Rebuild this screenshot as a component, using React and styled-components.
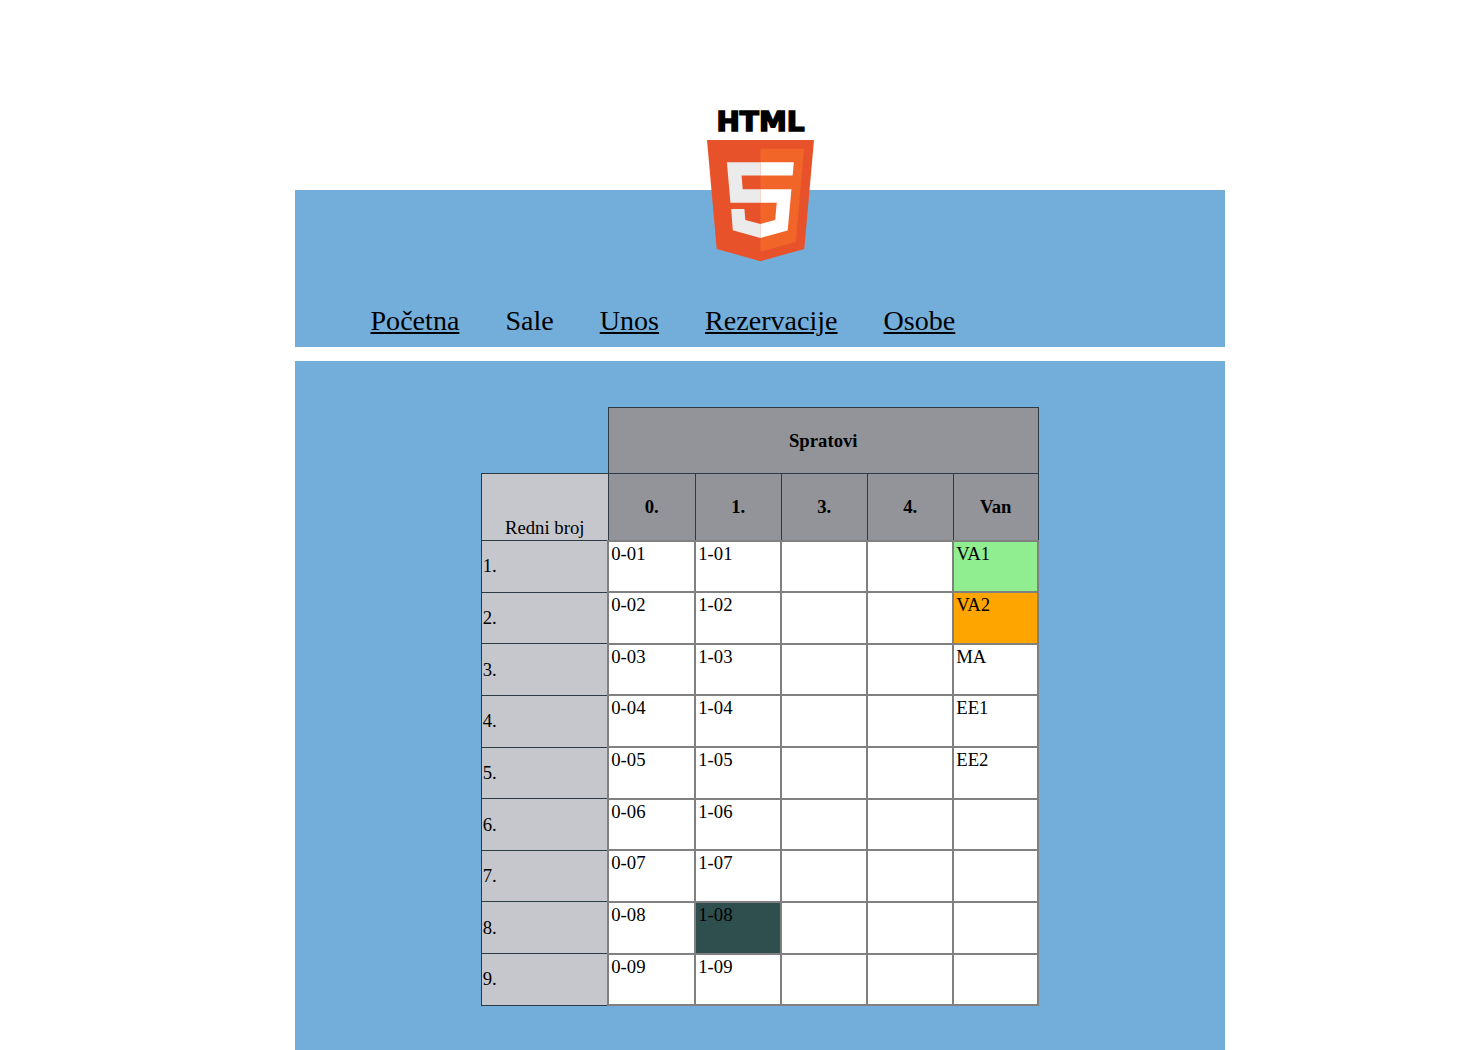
import React from "react";
import styled, { createGlobalStyle } from "styled-components";

const GlobalStyle = createGlobalStyle`
    html, body {
        margin: 0;
        padding: 0;
        height: 1050px;
        overflow: hidden;
        background: #ffffff;
        font-family: "Liberation Serif", "Times New Roman", serif;
        color: #000000;
    }
`;

const Page = styled.div`
    width: 930px;
    margin-left: 295px;
    padding-top: 190px;
`;

const Header = styled.header`
    height: 156.5px;
    background-color: #73aedb;
    display: flex;
    flex-direction: column;
`;

const Logo = styled.svg`
    display: block;
    width: 107px;
    height: 162px;
    margin: -90px 0 0 412.3px;
`;

const Nav = styled.nav`
    display: flex;
    gap: 46px;
    margin-top: 42px;
    padding-left: 75.5px;
    font-size: 28.08px;
    line-height: 34px;
`;

const NavLink = styled.a`
    color: #000000;
    text-decoration: ${(p) => (p.$plain ? "none" : "underline")};
    cursor: pointer;
`;

const Content = styled.main`
    margin-top: 14.5px;
    height: 689px;
    padding-top: 46px;
    box-sizing: border-box;
    background-color: #73aedb;
`;

const Table = styled.table`
    width: 557px;
    margin: 0 auto;
    table-layout: fixed;
    border-collapse: collapse;
    font-size: 18.72px;
`;

const Column = styled.col`
    width: ${(p) => p.$width}px;
`;

const HeadRow = styled.tr`
    height: ${(p) => p.$height}px;
`;

const BodyRow = styled.tr`
    height: 51.65px;
`;

const Blank = styled.td`
    padding: 0;
    border: none;
`;

const HeadCell = styled.th`
    padding: 1px 0 0;
    border: 1px solid #2c3a44;
    background-color: #939499;
    font-weight: 700;
    text-align: center;
    vertical-align: middle;
`;

const CornerCell = styled.td`
    padding: 0 0 1px;
    border: 1px solid #2c3a44;
    background-color: #c6c7cc;
    text-align: center;
    vertical-align: bottom;
`;

const IndexCell = styled.td`
    padding: 1px 1px;
    border: 1px solid #2c3a44;
    background-color: #c6c7cc;
    vertical-align: middle;
`;

const RoomCell = styled.td`
    padding: 1px 2px 0;
    border: 2px solid #808080;
    background-color: ${(p) => p.$bg || "#ffffff"};
    vertical-align: top;
`;

const columnWidths = [127, 87, 86, 86, 86, 85];
const floors = ["0.", "1.", "3.", "4.", "Van"];
const outside = ["VA1", "VA2", "MA", "EE1", "EE2", "", "", "", ""];
const outsideColors = { VA1: "#90ee90", VA2: "#ffa500" };
const rows = [1, 2, 3, 4, 5, 6, 7, 8, 9];

function Html5Logo() {
    return (
        <Logo viewBox="0 -10 107 162" aria-label="HTML5">
            <text
                x="53.5"
                y="20.5"
                textAnchor="middle"
                textLength="88"
                lengthAdjust="spacingAndGlyphs"
                fontFamily="'DejaVu Sans', sans-serif"
                fontWeight="700"
                fontSize="26"
                stroke="#000000"
                strokeWidth="1.5"
            >
                HTML
            </text>
            <g transform="translate(-7.1 30) scale(0.2367)">
                <path fill="#e8522a" d="M71 460L30 0h452l-41 460-185.500 52z" />
                <path fill="#f16529" d="M256 472l149-41 35-394H256z" />
                <path fill="#ebebeb" d="M256 208h-75l-5-58h80V94H114l15 171h127zM256 355l-64-17-4-46h-56l7 89 117 33z" />
                <path fill="#ffffff" d="M255.800 208v57h69l-7 73-62 17v59l115-32 16-174zM255.800 94v56h136l5-56z" />
            </g>
        </Logo>
    );
}

function App() {
    return (
        <>
            <GlobalStyle />
            <Page>
                <Header>
                    <Html5Logo />
                    <Nav>
                        <NavLink href="#">Početna</NavLink>
                        <NavLink $plain>Sale</NavLink>
                        <NavLink href="#">Unos</NavLink>
                        <NavLink href="#">Rezervacije</NavLink>
                        <NavLink href="#">Osobe</NavLink>
                    </Nav>
                </Header>
                <Content>
                    <Table>
                        <colgroup>
                            {columnWidths.map((width, i) => (
                                <Column key={i} $width={width} />
                            ))}
                        </colgroup>
                        <thead>
                            <HeadRow $height={66}>
                                <Blank />
                                <HeadCell colSpan={5}>Spratovi</HeadCell>
                            </HeadRow>
                            <HeadRow $height={67}>
                                <CornerCell>Redni broj</CornerCell>
                                {floors.map((floor) => (
                                    <HeadCell key={floor}>{floor}</HeadCell>
                                ))}
                            </HeadRow>
                        </thead>
                        <tbody>
                            {rows.map((n, i) => (
                                <BodyRow key={n}>
                                    <IndexCell>{n}.</IndexCell>
                                    <RoomCell>0-0{n}</RoomCell>
                                    <RoomCell $bg={n === 8 ? "#2f4f4f" : undefined}>1-0{n}</RoomCell>
                                    <RoomCell />
                                    <RoomCell />
                                    <RoomCell $bg={outsideColors[outside[i]]}>{outside[i]}</RoomCell>
                                </BodyRow>
                            ))}
                        </tbody>
                    </Table>
                </Content>
            </Page>
        </>
    );
}

export default App;
